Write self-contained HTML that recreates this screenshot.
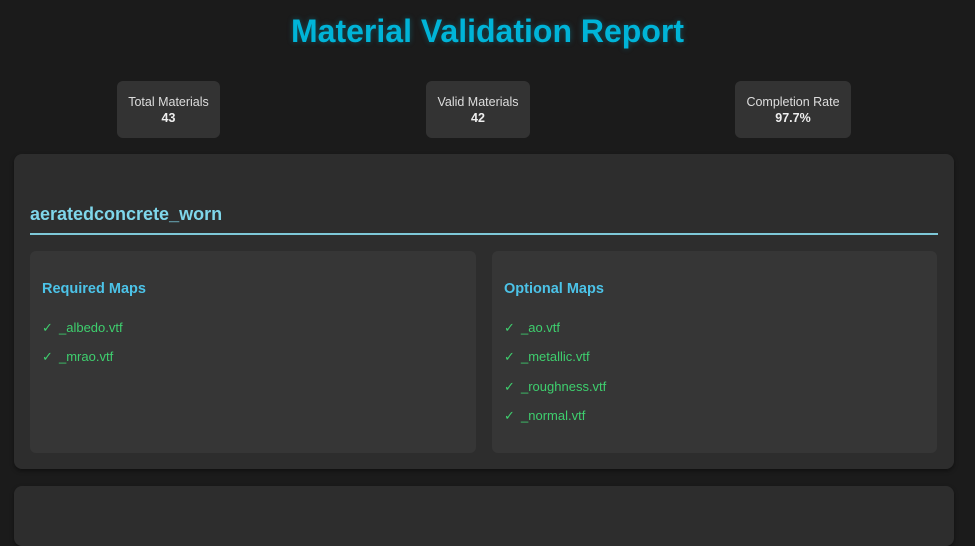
<!DOCTYPE html>
<html><head><style>
*{margin:0;padding:0;box-sizing:border-box}
body{width:975px;height:518px;overflow:hidden;background:#1b1b1b;font-family:"Liberation Sans",sans-serif;position:relative;color:#ddd}
h1{position:absolute;top:13px;left:0;width:975px;text-align:center;font-size:32px;font-weight:bold;color:#00b4d8;text-shadow:0 0 6px rgba(0,180,216,0.35)}
.stat{position:absolute;top:81px;height:57px;background:#333;border-radius:6px;text-align:center;font-size:12.5px;color:#ddd;padding-top:13px;line-height:16px}
.stat b{display:block;color:#eee}
.card{position:absolute;left:14px;width:940px;background:#2d2d2d;border-radius:8px;box-shadow:0 2px 4px rgba(0,0,0,0.4)}
.name{position:absolute;left:16px;top:50px;font-size:18px;font-weight:bold;color:#7fd6ea}
.line{position:absolute;left:16px;top:79px;width:908px;height:2px;background:#7ec8d8}
.box{position:absolute;top:97px;height:202px;background:#363636;border-radius:6px}
.box h3{position:absolute;top:30px;left:12px;font-size:14.5px;color:#4cc3e8}
.it{position:absolute;left:12px;font-size:13px;color:#3ecf6e}
.it span{display:inline-block;width:17px}
</style></head><body>
<h1>Material Validation Report</h1>
<div class="stat" style="left:117px;width:103px">Total Materials<b>43</b></div>
<div class="stat" style="left:426px;width:104px">Valid Materials<b>42</b></div>
<div class="stat" style="left:735px;width:116px">Completion Rate<b>97.7%</b></div>
<div class="card" style="top:154px;height:315px">
<div class="name">aeratedconcrete_worn</div>
<div class="line"></div>
<div class="box" style="left:16px;width:446px">
<h3>Required Maps</h3>
<div class="it" style="top:69px"><span>✓</span>_albedo.vtf</div>
<div class="it" style="top:98px"><span>✓</span>_mrao.vtf</div>
</div>
<div class="box" style="left:478px;width:445px">
<h3>Optional Maps</h3>
<div class="it" style="top:69px"><span>✓</span>_ao.vtf</div>
<div class="it" style="top:98px"><span>✓</span>_metallic.vtf</div>
<div class="it" style="top:128px"><span>✓</span>_roughness.vtf</div>
<div class="it" style="top:157px"><span>✓</span>_normal.vtf</div>
</div>
</div>
<div class="card" style="top:486px;height:60px"></div>
</body></html>
